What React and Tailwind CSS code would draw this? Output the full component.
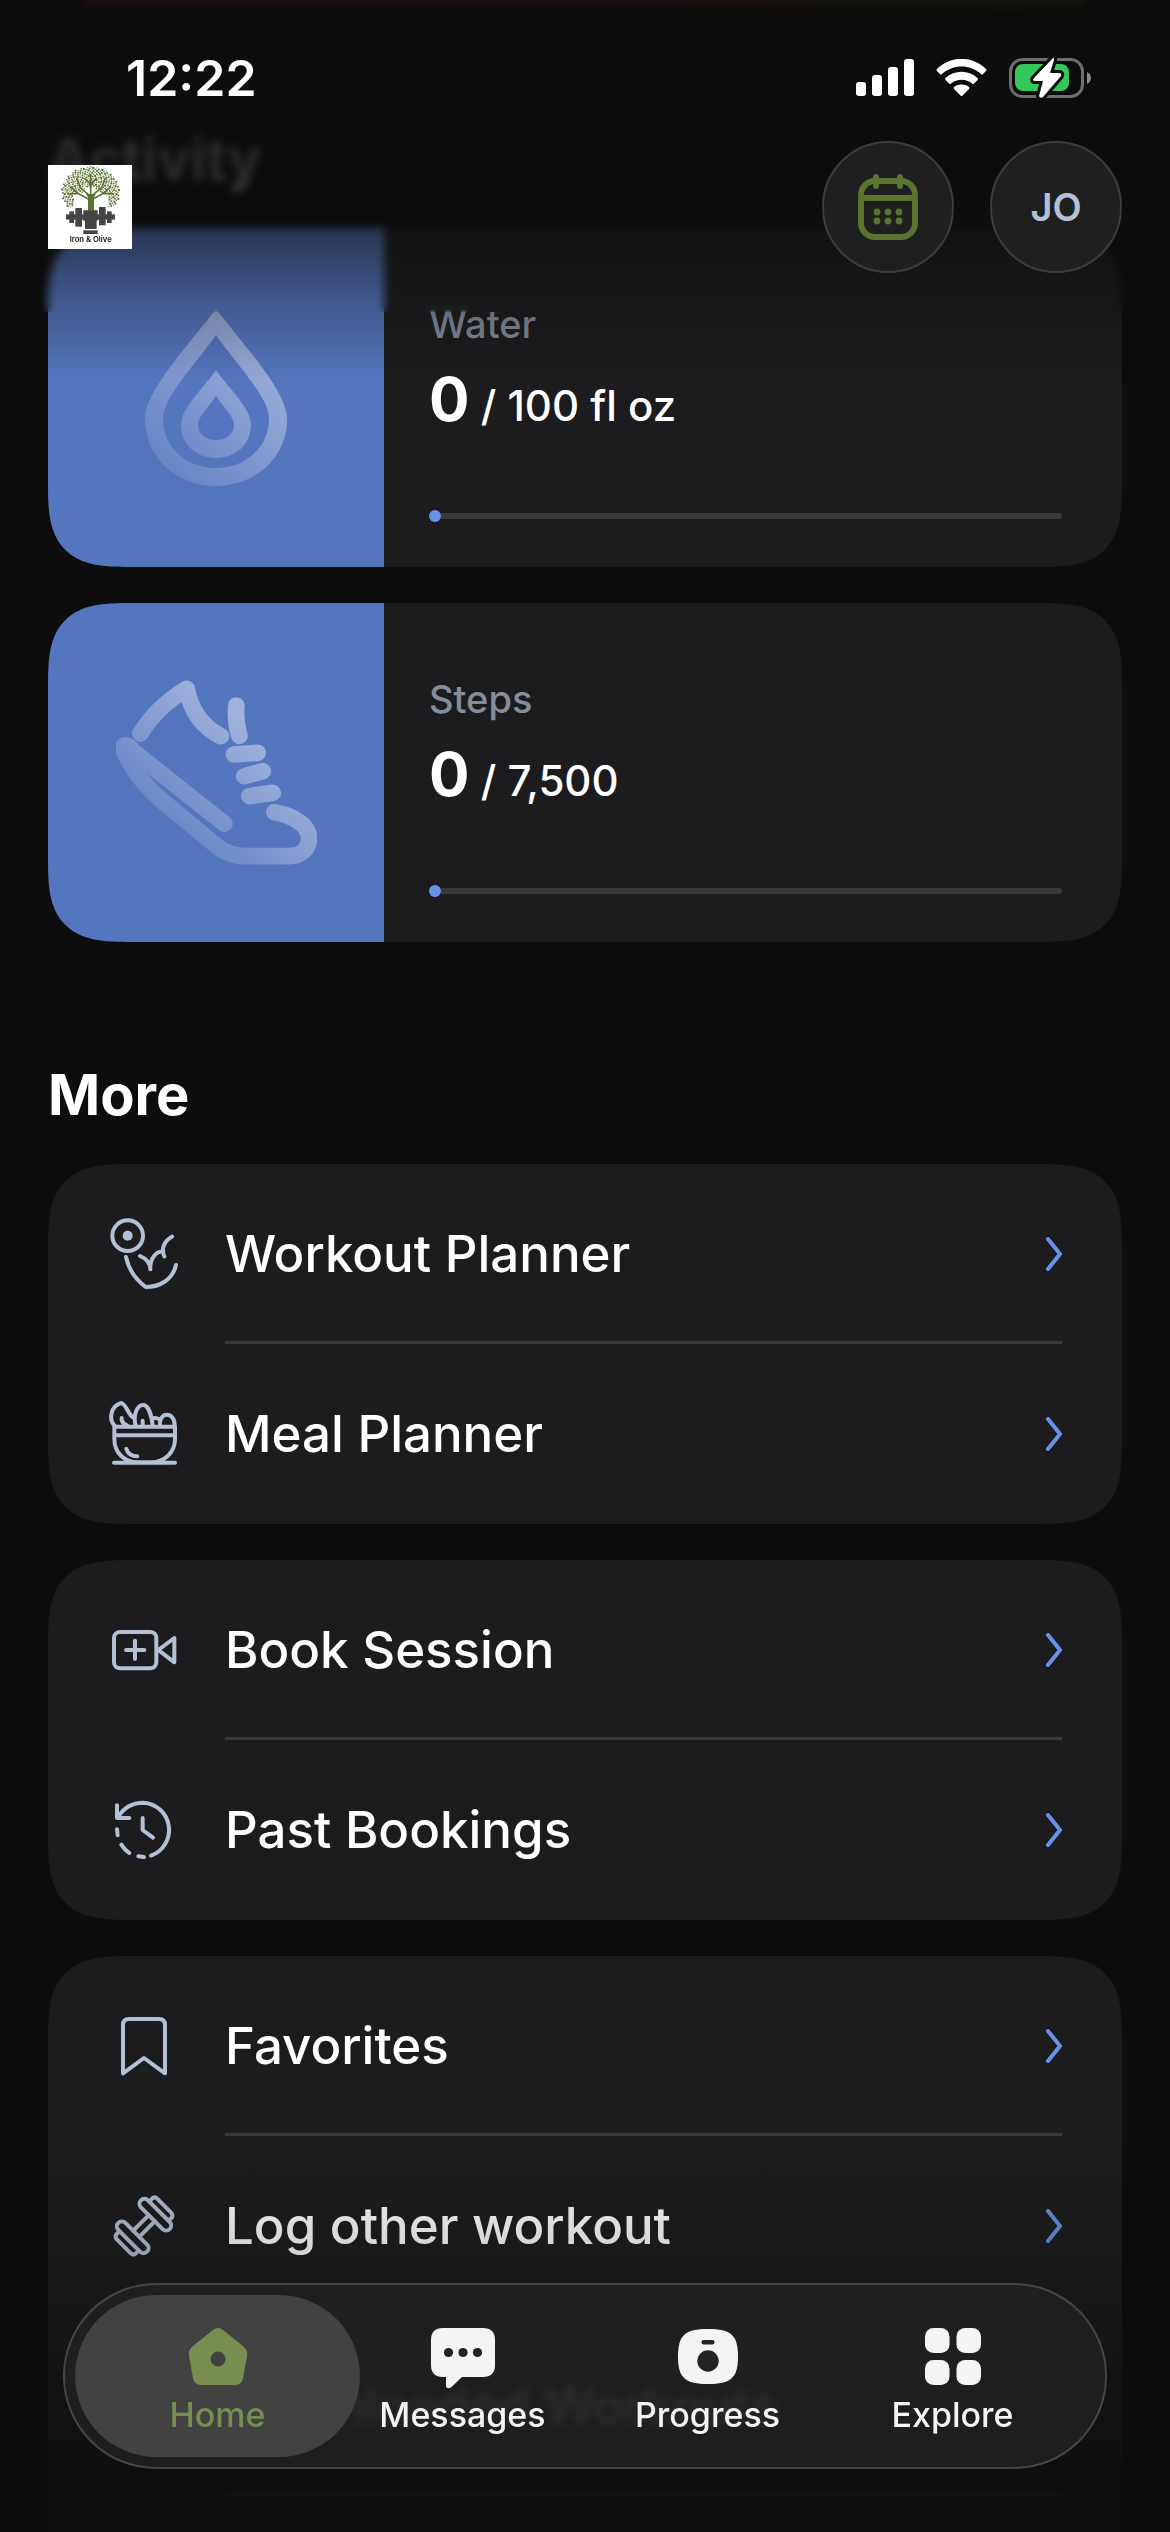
import React, { useState } from 'react';

const METRICS = [
  { id: 'water', label: 'Water', value: 0, goal: '100 fl oz', progress: 0, Icon: DropIcon },
  { id: 'steps', label: 'Steps', value: 0, goal: '7,500', progress: 0, Icon: ShoeIcon },
];

const MENU_GROUPS = [
  {
    id: 'planners',
    items: [
      { label: 'Workout Planner', Icon: WorkoutIcon },
      { label: 'Meal Planner', Icon: MealIcon },
    ],
  },
  {
    id: 'bookings',
    items: [
      { label: 'Book Session', Icon: SessionIcon },
      { label: 'Past Bookings', Icon: HistoryIcon },
    ],
  },
  {
    id: 'library',
    continues: true,
    items: [
      { label: 'Favorites', Icon: BookmarkIcon },
      { label: 'Log other workout', Icon: DumbbellIcon },
      { label: 'Downloaded Workouts', Icon: DownloadIcon },
    ],
  },
];

const TABS = [
  { label: 'Home', Icon: HomeTabIcon },
  { label: 'Messages', Icon: MessagesTabIcon },
  { label: 'Progress', Icon: ProgressTabIcon },
  { label: 'Explore', Icon: ExploreTabIcon },
];

/* Metric tile icons */

function DropIcon() {
  return (
    <svg width="142" height="177" viewBox="0 0 142 177" aria-hidden="true">
      <defs>
        <linearGradient id="dropFade" x1="20" y1="150" x2="120" y2="50" gradientUnits="userSpaceOnUse">
          <stop offset="0" stopColor="#fff" stopOpacity="0.12" />
          <stop offset="1" stopColor="#fff" stopOpacity="0.4" />
        </linearGradient>
      </defs>
      <path
        fill="url(#dropFade)"
        fillRule="evenodd"
        d="M71 0C100 38 142 82 142 110C142 149 110 177 71 177C32 177 0 149 0 110C0 82 42 38 71 0ZM71 26C50 56 18 88 18 110C18 138 41 159 71 159C101 159 124 138 124 110C124 88 92 56 71 26ZM71 61C85 81 106 99 106 116C106 135 91 149 71 149C51 149 36 135 36 116C36 99 57 81 71 61ZM71 87C64 98 53 107 53 116C53 125 61 131 71 131C81 131 89 125 89 116C89 107 78 98 71 87Z"
      />
    </svg>
  );
}

function ShoeIcon() {
  return (
    <svg width="201" height="185" viewBox="45 57 603 554" aria-hidden="true">
      <defs>
        <linearGradient id="shoeFade" x1="170" y1="470" x2="430" y2="180" gradientUnits="userSpaceOnUse">
          <stop offset="0" stopColor="#fff" stopOpacity="0.12" />
          <stop offset="1" stopColor="#fff" stopOpacity="0.44" />
        </linearGradient>
      </defs>
      <path
        fill="none"
        stroke="url(#shoeFade)"
        strokeWidth="50"
        strokeLinecap="round"
        strokeLinejoin="round"
        d="M118 217C152 162 198 118 257 83C270 150 305 198 360 225M406 133C403 165 406 195 415 224M399 280L470 275M430 345L485 330M445 405L515 395M520 453C580 462 624 496 624 530C624 563 600 585 565 585H430C398 585 365 570 345 553L175 412C130 372 94 325 72 275C55 245 82 246 98 272L370 488"
      />
    </svg>
  );
}

/* List icons */

function LineIcon({ viewBox, children }) {
  return (
    <svg
      width="72"
      height="72"
      viewBox={viewBox}
      fill="none"
      stroke="currentColor"
      strokeWidth="12"
      strokeLinecap="round"
      strokeLinejoin="round"
      aria-hidden="true"
      className="shrink-0 text-[#b4c0d3]"
    >
      {children}
    </svg>
  );
}

function WorkoutIcon() {
  return (
    <LineIcon viewBox="84 84 216 216">
      <circle cx="143" cy="137" r="46" />
      <circle cx="143" cy="137" r="15" fill="currentColor" stroke="none" />
      <path d="M138 201C145 235 168 269 197 291C240 291 278 269 288 225M180 198C198 205 210 220 211 238C209 208 226 184 250 184M276 140C256 150 241 174 253 199" />
    </LineIcon>
  );
}

function MealIcon() {
  return (
    <LineIcon viewBox="84 624 216 216">
      <path d="M103 710H285V747C285 790 250 817 215 817H173C135 817 103 790 103 747ZM103 736H285M102 818H285M139 777Q147 799 172 799" />
      <path d="M103 706C87 690 90 648 124 639C142 646 143 675 162 684M125 684V690Q129 702 141 706M167 706C158 675 172 645 189 645C206 645 215 680 218 706M188 692V706M216 686Q226 681 240 689M240 706C236 664 285 664 284 706" />
    </LineIcon>
  );
}

function SessionIcon() {
  return (
    <LineIcon viewBox="84 72 216 216">
      <rect x="102" y="126" width="127" height="109" rx="18" />
      <path d="M138 180H193M165 152V207M235 180L283 144V217Z" />
    </LineIcon>
  );
}

function HistoryIcon() {
  return (
    <LineIcon viewBox="84 612 216 216">
      <path d="M114 681C132 652 160 638 190 638A82 82 0 0 1 213 797M111 646V684H148M111 718L113 736M124 764Q134 780 148 789M175 799L192 801M188 684V720L219 743" />
    </LineIcon>
  );
}

function BookmarkIcon() {
  return (
    <LineIcon viewBox="84 90 216 216">
      <path d="M129 280V135Q129 117 147 117H237Q255 117 255 135V280L192 234Z" />
    </LineIcon>
  );
}

function DumbbellIcon() {
  return (
    <LineIcon viewBox="84 630 216 216">
      <g transform="rotate(-45 192 738)">
        <rect x="225" y="677" width="30" height="122" rx="15" />
        <path d="M255 699Q257 697 266 697Q278 697 278 709V767Q278 779 266 779Q257 779 255 777" />
        <rect x="129" y="677" width="30" height="122" rx="15" />
        <path d="M129 699Q127 697 118 697Q106 697 106 709V767Q106 779 118 779Q127 779 129 777" />
        <path d="M159 725H225M159 751H225" />
      </g>
    </LineIcon>
  );
}

function DownloadIcon() {
  return (
    <LineIcon viewBox="84 84 216 216">
      <path d="M192 110V230M145 190L192 235L239 190M120 275H264" />
    </LineIcon>
  );
}

function Chevron() {
  return (
    <svg width="16" height="34" viewBox="0 0 16 34" fill="none" stroke="#6991ea" strokeWidth="4" strokeLinecap="round" strokeLinejoin="round" aria-hidden="true" className="shrink-0">
      <path d="M2 2L14 17L2 32" />
    </svg>
  );
}

/* Tab bar icons */

function HomeTabIcon() {
  return (
    <svg width="64" height="64" viewBox="0 0 64 64" fill="currentColor" aria-hidden="true">
      <path
        fillRule="evenodd"
        d="M27 3Q32 -1 37 3L57 19Q62 23 61 29L57 51Q56 58 49 58H15Q8 58 7 51L3 29Q2 23 7 19ZM32 24.5A7.5 7.5 0 1 0 32 39.5A7.5 7.5 0 1 0 32 24.5Z"
      />
    </svg>
  );
}

function MessagesTabIcon() {
  return (
    <svg width="64" height="64" viewBox="0 0 64 64" fill="currentColor" aria-hidden="true">
      <path d="M12 1H52Q64 1 64 13V38Q64 50 52 50H31L20 60.500Q15 63 15 58V50H12Q0 50 0 38V13Q0 1 12 1Z" />
      <g fill="#232325">
        <circle cx="17.500" cy="25.500" r="4.600" />
        <circle cx="32" cy="25.500" r="4.600" />
        <circle cx="46.500" cy="25.500" r="4.600" />
      </g>
    </svg>
  );
}

function ProgressTabIcon() {
  return (
    <svg width="64" height="64" viewBox="0 0 64 64" fill="currentColor" aria-hidden="true">
      <path d="M32 2C55 2 62 8 62 29.500C62 51 55 57 32 57C9 57 2 51 2 29.500C2 8 9 2 32 2Z" />
      <g fill="#232325">
        <circle cx="32" cy="34" r="10.700" />
        <rect x="25.500" y="13" width="13" height="4.500" rx="2.200" />
      </g>
    </svg>
  );
}

function ExploreTabIcon() {
  return (
    <svg width="64" height="64" viewBox="0 0 64 64" fill="currentColor" aria-hidden="true">
      <rect x="4" y="1" width="24.500" height="25" rx="8.500" />
      <rect x="35.500" y="1" width="24.500" height="25" rx="8.500" />
      <rect x="4" y="33" width="24.500" height="25" rx="8.500" />
      <rect x="35.500" y="33" width="24.500" height="25" rx="8.500" />
    </svg>
  );
}

/* Header */

// leaves are spread on a spiral so the crown looks even
const LEAVES = Array.from({ length: 420 }, (_, i) => {
  const r = Math.sqrt((i + 20) / 440);
  const a = i * 2.39996;
  return { x: 182 + Math.cos(a) * r * 86, y: 126 + Math.sin(a) * r * 76, size: 3 + (i % 4) };
}).filter(({ x, y }) => y < 128 || (Math.abs(x - 182) > 52 && y < 172));

function BrandLogo() {
  return (
    <svg viewBox="54 45 252 252" role="img" aria-label="Iron & Olive" className="size-[84px] bg-white">
      <g fill="#5a7330">
        {LEAVES.map(({ x, y, size }, i) => (
          <rect key={i} x={x - size / 2} y={y - size / 2} width={size} height={size} />
        ))}
      </g>
      <path
        fill="none"
        stroke="#5a7330"
        strokeWidth="5"
        d="M182 140V72M182 140L150 112L140 84M182 140L216 112L226 84M176 148L144 130L112 132M188 148L220 130L252 132M144 131L122 110M220 131L242 110M182 104L164 84M182 104L200 84"
      />
      <path fill="#5a7330" d="M174 182V142L168 132H198L192 142V182Z" />
      <g fill="#454545">
        <path d="M160 181H203V212H200V237H165V212H160Z" />
        <rect x="160" y="241" width="43" height="11" />
        <rect x="136" y="174" width="20" height="56" />
        <rect x="207" y="171" width="20" height="55" />
        <rect x="118" y="184" width="14" height="35" />
        <rect x="231" y="184" width="14" height="35" />
        <rect x="108" y="193" width="147" height="16" />
      </g>
      <text x="182" y="275" textAnchor="middle" fontSize="23" fontWeight="600" fill="#111">
        Iron &amp; Olive
      </text>
    </svg>
  );
}

function CalendarIcon() {
  return (
    <svg width="60" height="66" viewBox="0 0 60 66" fill="none" stroke="#5a7330" strokeWidth="6" strokeLinecap="round" aria-hidden="true">
      <rect x="3" y="7" width="54" height="56" rx="14" />
      <path d="M3 24H57M18 3V12M42 3V12" />
      <g fill="#5a7330" stroke="none">
        {[19, 30, 41].map((x) => (
          <React.Fragment key={x}>
            <circle cx={x} cy="38" r="3.400" />
            <circle cx={x} cy="47" r="3.400" />
          </React.Fragment>
        ))}
      </g>
    </svg>
  );
}

function StatusBar() {
  return (
    <div className="flex h-[141px] items-center justify-between pt-[15px] pr-[78px] pl-[126px]">
      <span className="text-[50px] leading-[60px] font-semibold">12:22</span>
      <div className="flex items-center gap-[22px]">
        <svg width="58" height="38" viewBox="0 0 58 38" fill="#fff" aria-hidden="true">
          <rect x="0" y="23" width="10" height="14" rx="3" />
          <rect x="16" y="16" width="10" height="21" rx="3" />
          <rect x="32" y="8" width="10" height="29" rx="3" />
          <rect x="48" y="0" width="10" height="37" rx="3" />
        </svg>
        <svg width="51" height="38" viewBox="0 0 51 38" fill="#fff" aria-hidden="true">
          <path d="M1 10C15 -3.500 36 -3.500 50 10Q51 11 50 12L47 15Q46 16 45 15C34 5 17 5 6 15Q5 16 4 15L1 12Q0 11 1 10Z" />
          <path d="M9.500 19C18.500 10.500 32.500 10.500 41.500 19Q42.500 20 41.500 21L38 24.500Q37 25.500 36 24.500C30 19.500 21 19.500 15 24.500Q14 25.500 13 24.500L9.500 21Q8.500 20 9.500 19Z" />
          <path d="M18 28C22.500 24.800 28.500 24.800 33 28Q34 29 33 30L26.500 36.500Q25.500 37.500 24.500 36.500L18 30Q17 29 18 28Z" />
        </svg>
        <svg width="83" height="42" viewBox="0 0 83 42" aria-hidden="true">
          <rect x="1.500" y="2.500" width="72" height="37" rx="12" fill="none" stroke="#6e6e6e" strokeWidth="3" />
          <path d="M78 15Q82 17 82 21Q82 25 78 27Z" fill="#8a8a8a" />
          <rect x="6" y="7" width="54" height="27" rx="8" fill="#34c759" />
          <path
            d="M44 1L25 21Q23 24 26 24H34L30 39Q31 42 34 40L52 19Q53 16 50 16H41L45 3Q45 0 44 1Z"
            fill="#fff"
            stroke="#0d0d0d"
            strokeWidth="6"
            strokeLinejoin="round"
            paintOrder="stroke"
          />
        </svg>
      </div>
    </div>
  );
}

function Header() {
  return (
    <header className="absolute inset-x-0 top-0">
      {/* Progressive blur behind the bar */}
      <div className="pointer-events-none absolute inset-x-0 top-0 h-[312px] backdrop-blur-[4px]"></div>
      <div className="pointer-events-none absolute inset-x-0 top-0 h-[380px] bg-linear-to-b from-[#0d0d0d]/88 from-45% via-[#0d0d0d]/28 via-79% to-[#0d0d0d]/0"></div>
      <div className="relative">
        <StatusBar />
        <div className="flex items-center justify-between px-12">
          <BrandLogo />
          <div className="flex gap-9">
            <button
              aria-label="Calendar"
              className="flex size-[132px] items-center justify-center rounded-full border-2 border-[#3c3c3d] bg-[#1f1f20]"
            >
              <CalendarIcon />
            </button>
            <button
              aria-label="Account"
              className="flex size-[132px] items-center justify-center rounded-full border-2 border-[#3c3c3d] bg-[#1f1f20] text-[38px] font-semibold text-[#b4c0d3]"
            >
              JO
            </button>
          </div>
        </div>
      </div>
    </header>
  );
}

function MetricCard({ metric }) {
  const { label, value, goal, progress, Icon } = metric;

  return (
    <article className="flex h-[339px] overflow-hidden rounded-[84px] bg-[#1c1c1e] [corner-shape:superellipse(1.6)]">
      <div className="flex w-[336px] shrink-0 items-center justify-center bg-[#5476bf]">
        <Icon />
      </div>
      <div className="flex flex-1 flex-col pt-[72px] pr-[60px] pb-[45px] pl-[45px]">
        <h3 className="text-[38px] leading-[48px] font-medium text-[#858d9b]">{label}</h3>
        <p className="mt-[15px] text-[42px] leading-[72px] font-medium">
          <span className="text-[60px] font-bold">{value}</span> / {goal}
        </p>
        <div
          role="progressbar"
          aria-label={label}
          aria-valuenow={progress}
          className="mt-auto flex h-3 items-center"
        >
          <div className="h-3 min-w-3 rounded-full bg-[#6991ea]" style={{ width: `${progress}%` }}></div>
          <div className="h-[6px] flex-1 rounded-r-full bg-[#38383a]"></div>
        </div>
      </div>
    </article>
  );
}

function MenuGroup({ items, continues }) {
  return (
    <ul
      className={
        continues
          ? 'overflow-hidden rounded-t-[84px] bg-[#1c1c1e] pb-20 [corner-shape:superellipse(1.6)]'
          : 'overflow-hidden rounded-[84px] bg-[#1c1c1e] [corner-shape:superellipse(1.6)]'
      }
    >
      {items.map(({ label, Icon }, index) => (
        <li key={label}>
          <a href="#" className="flex h-[180px] items-center gap-[45px] pl-[60px]">
            <Icon />
            <span
              className={
                continues || index < items.length - 1
                  ? 'mr-[60px] flex h-full flex-1 items-center justify-between border-b-3 border-[#38383a] pt-[3px]'
                  : 'mr-[60px] flex h-full flex-1 items-center justify-between'
              }
            >
              <span className="text-[51px] leading-[60px] font-medium">{label}</span>
              <Chevron />
            </span>
          </a>
        </li>
      ))}
    </ul>
  );
}

function TabBar() {
  const [active, setActive] = useState('Home');

  return (
    <nav className="absolute inset-x-[63px] bottom-[63px] flex h-[186px] items-center rounded-full border-2 border-[#464648] bg-[#222223]/80 px-[30px] backdrop-blur-[4px]">
      {TABS.map(({ label, Icon }) => (
        <button
          key={label}
          onClick={() => setActive(label)}
          className={
            active === label
              ? '-mx-5 flex h-[162px] flex-1 flex-col items-center gap-1 rounded-full bg-[#444445]/95 pt-8 text-[#778e50]'
              : '-mx-5 flex h-[162px] flex-1 flex-col items-center gap-1 rounded-full pt-8 text-[#f4f4f4]'
          }
        >
          <Icon />
          <span className="text-[34px] leading-[40px] font-medium">{label}</span>
        </button>
      ))}
    </nav>
  );
}

export default function App() {
  return (
    <div className="relative h-screen overflow-hidden bg-[#0d0d0d] font-['Inter',sans-serif] text-white">
      <main className="px-12">
        <div className="mx-9 h-[6px] bg-linear-to-r from-[#8a2a2a] via-[#8a2a2a] via-50% to-[#4a5a20]"></div>

        <section className="pt-[117px]">
          <h2 className="mb-[33px] text-[56px] leading-[72px] font-bold">Activity</h2>
          <div className="flex flex-col gap-9">
            {METRICS.map((metric) => (
              <MetricCard key={metric.id} metric={metric} />
            ))}
          </div>
        </section>

        <section className="pt-[117px]">
          <h2 className="mb-[33px] text-[56px] leading-[72px] font-bold">More</h2>
          <div className="flex flex-col gap-9">
            {MENU_GROUPS.map((group) => (
              <MenuGroup key={group.id} items={group.items} continues={group.continues} />
            ))}
          </div>
        </section>
      </main>

      <Header />

      {/* Fade under the tab bar */}
      <div className="pointer-events-none absolute inset-x-0 bottom-0 h-[400px] bg-linear-to-t from-[#0d0d0d]/86 from-15% via-[#0d0d0d]/18 via-70% to-[#0d0d0d]/0"></div>
      <TabBar />
    </div>
  );
}
